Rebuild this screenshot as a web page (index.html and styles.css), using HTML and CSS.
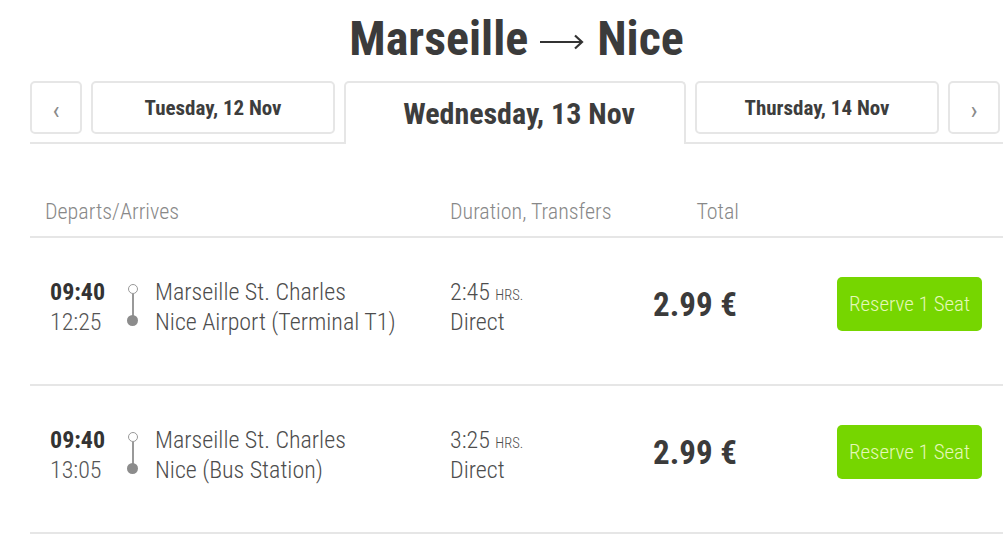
FILE: index.html
```html
<!DOCTYPE html>
<html lang="en">
<head>
<meta charset="utf-8">
<title>Marseille → Nice</title>
<link rel="stylesheet" href="styles.css">
</head>
<body>
<div class="page">
  <h1 class="title">Marseille<svg class="arrow" width="44" height="16" viewBox="0 0 44 16" aria-label="to"><path d="M0 8H42M35 1.5L42 8L35 14.5" fill="none" stroke="#333" stroke-width="2.2"/></svg>Nice</h1>

  <nav class="tabs">
    <a class="tab tab-nav">‹</a>
    <a class="tab tab-day">Tuesday, 12 Nov</a>
    <a class="tab tab-active">Wednesday, 13 Nov</a>
    <a class="tab tab-day">Thursday, 14 Nov</a>
    <a class="tab tab-nav">›</a>
  </nav>

  <div class="list-head">
    <div class="h-route">Departs/Arrives</div>
    <div class="h-dur">Duration, Transfers</div>
    <div class="h-total">Total</div>
  </div>

  <div class="trip">
    <div class="route">
      <div class="times">
        <div class="dep">09:40</div>
        <div class="arr">12:25</div>
      </div>
      <div class="line">
        <span class="dot-open"></span>
        <span class="stem"></span>
        <span class="dot-fill"></span>
      </div>
      <div class="stations">
        <div>Marseille St. Charles</div>
        <div>Nice Airport (Terminal T1)</div>
      </div>
    </div>
    <div class="dur">
      <div>2:45 <small>HRS.</small></div>
      <div>Direct</div>
    </div>
    <div class="price">2.99 €</div>
    <div class="action"><button class="reserve">Reserve 1 Seat</button></div>
  </div>

  <div class="trip">
    <div class="route">
      <div class="times">
        <div class="dep">09:40</div>
        <div class="arr">13:05</div>
      </div>
      <div class="line">
        <span class="dot-open"></span>
        <span class="stem"></span>
        <span class="dot-fill"></span>
      </div>
      <div class="stations">
        <div>Marseille St. Charles</div>
        <div>Nice (Bus Station)</div>
      </div>
    </div>
    <div class="dur">
      <div>3:25 <small>HRS.</small></div>
      <div>Direct</div>
    </div>
    <div class="price">2.99 €</div>
    <div class="action"><button class="reserve">Reserve 1 Seat</button></div>
  </div>
</div>
</body>
</html>
```

FILE: styles.css
```css
* { box-sizing: border-box; }

body {
  margin: 0;
  background: #fff;
  font-family: "Roboto Condensed", "Liberation Sans Narrow", "DejaVu Sans Condensed", Roboto, sans-serif;
  color: #555;
}

.page {
  margin-left: 30px;
  width: 973px;
}

.title {
  margin: 0;
  padding-top: 15px;
  height: 81px;
  font-size: 48px;
  line-height: 48px;
  font-weight: 700;
  color: #3b3b3b;
  text-align: center;
  white-space: nowrap;
}

.arrow {
  margin: 0 13px 0 12px;
  vertical-align: 5px;
}

.tabs {
  display: flex;
  align-items: flex-start;
  gap: 9px;
  border-bottom: 2px solid #e6e6e6;
}

.tab {
  display: flex;
  align-items: center;
  justify-content: center;
  height: 53px;
  border: 2px solid #e6e6e6;
  border-radius: 5px;
  background: #fff;
  color: #3d3d3d;
  font-weight: 700;
  font-size: 21px;
}

.tab-nav {
  width: 52px;
  color: #8a8a8a;
  font-weight: 400;
  font-size: 26px;
  padding-top: 5px;
}

.tab-day { width: 244px; }

.tab-active {
  width: 342px;
  height: 63px;
  margin-bottom: -2px;
  border-bottom: none;
  border-radius: 5px 5px 0 0;
  font-size: 30px;
  padding: 0 0 1px 8px;
}

.list-head {
  display: flex;
  padding: 53px 0 9px 15px;
  border-bottom: 2px solid #e6e6e6;
  font-size: 22px;
  line-height: 30px;
  font-weight: 300;
  color: #888;
  white-space: nowrap;
}

.h-route { width: 405px; }
.h-dur { width: 150px; }
.h-total { width: 139px; text-align: right; }

.trip {
  display: flex;
  align-items: center;
  padding: 39px 21px 47px 20px;
  border-bottom: 2px solid #e6e6e6;
  font-size: 24px;
  line-height: 30px;
  font-weight: 300;
  color: #4a4a4a;
  white-space: nowrap;
}

.route {
  display: flex;
  width: 400px;
}

.times { width: 77px; }
.dep { font-weight: 700; color: #333; }
.arr { color: #555; }

.line {
  width: 11px;
  margin-right: 17px;
  display: flex;
  flex-direction: column;
  align-items: center;
  padding-top: 7px;
}

.dot-open {
  width: 10px;
  height: 10px;
  border: 1.6px solid #999;
  border-radius: 50%;
}

.stem {
  width: 2px;
  height: 22px;
  background: #999;
}

.dot-fill {
  width: 11px;
  height: 11px;
  border-radius: 50%;
  background: #8c8c8c;
  margin-top: -1px;
}

.stations { color: #4d4d4d; }

.dur { width: 150px; color: #4d4d4d; }
.dur small {
  font-size: 14.5px;
  line-height: 1;
  text-transform: uppercase;
}

.price {
  width: 137px;
  text-align: right;
  font-size: 33px;
  font-weight: 700;
  color: #3b3b3b;
  line-height: 40px;
  margin-top: -4px;
}

.action {
  flex: 1;
  display: flex;
  justify-content: flex-end;
  margin-top: -6px;
}

.reserve {
  width: 145px;
  height: 54px;
  border: none;
  border-radius: 5px;
  background: #76d600;
  color: #e4f8b8;
  font-family: inherit;
  font-size: 21px;
  font-weight: 300;
}
```
